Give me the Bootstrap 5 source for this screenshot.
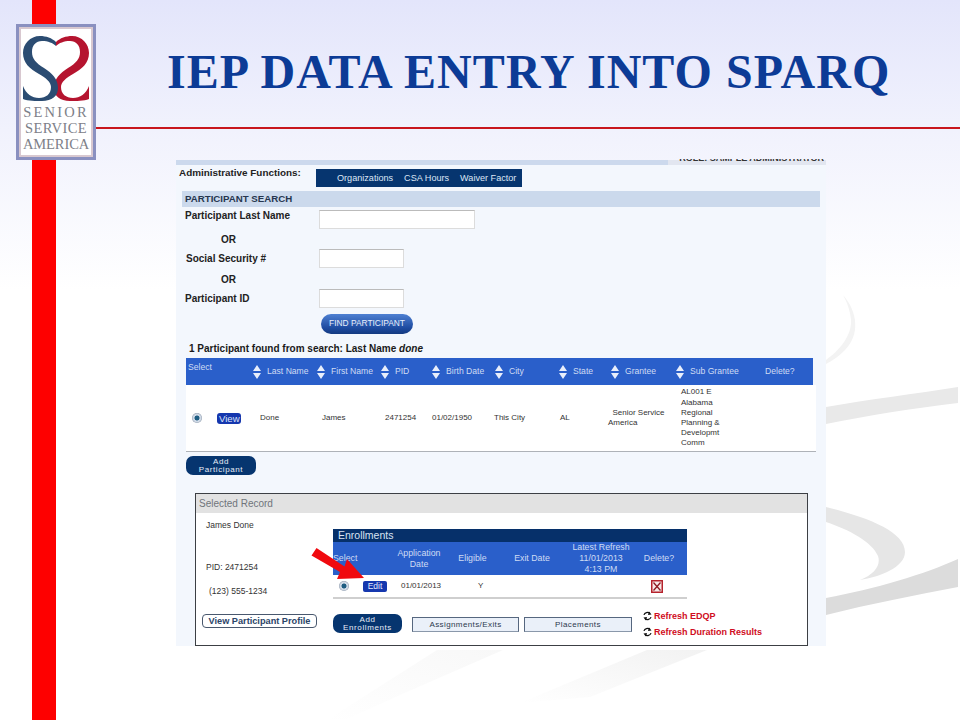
<!DOCTYPE html>
<html lang="en">
<head>
    <meta charset="UTF-8">
    <meta name="viewport" content="width=device-width, initial-scale=1.0">
    <title>IEP Data Entry Into SPARQ</title>
    <link rel="stylesheet" href="https://cdn.jsdelivr.net/npm/bootstrap@5.3.0/dist/css/bootstrap.min.css">
    <style>
        html, body { margin: 0; height: 720px; overflow: hidden; }
        body { background: #fff; font-family: "Liberation Sans", Arial, sans-serif; }

        /* slide canvas */
        .slide { position: relative; width: 960px; height: 720px; overflow: hidden; background: linear-gradient(#e3e5fb 0, #f1f2fd 130px, #fff 290px, #fff 100%); }
        .swoosh { position: absolute; left: 0; top: 0; }
        .red-bar { position: absolute; left: 32px; top: 0; width: 24px; height: 720px; background: #fe0000; }
        .red-line { position: absolute; left: 96px; top: 127px; width: 864px; height: 2px; background: #c8161d; }
        .logo-box { position: absolute; left: 16px; top: 24px; width: 80px; height: 136px; background: #fff; border: 3px solid #8a90c0; box-shadow: inset 0 0 0 2px #d8c8d0; }
        .logo-box svg { display: block; margin: 9px auto 0; }
        .logo-text { margin-top: 2px; font-family: "Liberation Serif", serif; color: #7d8088; font-size: 14.5px; line-height: 16px; text-align: center; }
        .logo-senior { letter-spacing: 2.2px; }
        .logo-service { letter-spacing: .4px; }
        .logo-america { letter-spacing: -.1px; }
        .slide-title { position: absolute; left: 167px; top: 44px; margin: 0; white-space: nowrap; font: bold 48px/55px "Liberation Serif", serif; letter-spacing: 1.05px; color: #0c3b96; }

        /* pasted screenshot */
        .shot { position: absolute; left: 176px; top: 160px; width: 650px; height: 486px; background: #f3f7fd; color: #111; font-size: 8.5px; }
        .role-clip { position: absolute; right: 2px; top: -1px; height: 3px; overflow: hidden; font-weight: 700; font-size: 9px; line-height: 9px; color: #333; }
        .role-clip span { display: block; margin-top: -5px; }
        .top-strip { display: flex; height: 5px; background: #ccd9ed; }
        .top-strip-end { width: 158px; margin-left: auto; background: #e2e6f0; }
        .admin-row { display: flex; align-items: flex-start; height: 26px; padding-left: 3px; }
        .admin-label { width: 137px; padding-top: 1px; font-weight: 700; font-size: 9.9px; line-height: 14px; color: #222; }
        .admin-menu { display: flex; width: 206px; height: 18px; margin-top: 4px; padding-left: 21px; gap: 11px; background: #06356f; color: #dce6f5; font-size: 9.1px; line-height: 18px; }
        .search-head { height: 16px; margin: 0 6px; padding-left: 3px; background: #cbd9ec; font-weight: 700; font-size: 9.7px; line-height: 16px; color: #26364f; }
        .form-line { display: flex; align-items: flex-start; }
        .line-name { margin-top: 2px; height: 20px; }
        .line-ssn { margin-top: 3px; }
        .line-pid { margin-top: 3px; }
        .field-label { width: 143px; padding-left: 9px; font-weight: 700; font-size: 10px; line-height: 13px; color: #222; }
        .line-ssn .field-label, .line-pid .field-label { padding-top: 3px; }
        .line-ssn .field-label { padding-left: 10px; }
        .or-label { padding-left: 45px; font-weight: 700; font-size: 10px; line-height: 13px; color: #222; }
        .or-first { margin-top: 4px; }
        .or-second { margin-top: 5px; }
        .field { height: 19px; background: #fff; border: 1px solid #dcdcdc; border-top-color: #bbb; }
        .line-name .field { width: 156px; margin-top: 1px; }
        .line-ssn .field, .line-pid .field { width: 85px; }
        .find-btn { width: 92px; height: 20px; margin: 6px 0 0 145px; border-radius: 10px; background: linear-gradient(#4e80d2, #1d4ba0 70%, #143a80); color: #e8eefa; font-size: 8.4px; line-height: 19px; text-align: center; }
        .found { margin-top: 8px; padding-left: 13px; font-weight: 700; font-size: 10px; line-height: 14px; color: #1a1a1a; }

        .grid-head { display: grid; grid-template-columns: 67px 64px 64px 51px 63px 64px 52px 65px 89px 1fr; align-items: center; width: 627px; height: 27px; margin: 2px 0 0 10px; background: #2a5fca; color: #cfdcf4; font-size: 8.6px; }
        .head-select { align-self: start; padding: 3px 0 0 2px; }
        .head-cell { display: flex; align-items: center; gap: 6px; white-space: nowrap; }
        .sort { display: block; flex: none; }
        .grid-body { display: grid; grid-template-columns: 25px 43px 62px 63px 47px 62px 66px 48px 73px 1fr; align-items: center; width: 630px; height: 67px; margin-left: 10px; padding-left: 6px; background: #fff; border-bottom: 1px solid #aeb2b8; font-size: 8px; line-height: 10.2px; color: #333; }
        .cell-nowrap { white-space: nowrap; }
        .radio-dot { display: block; width: 10px; height: 10px; border-radius: 50%; background: radial-gradient(circle, #1e5d82 0 2.2px, #cfd9e6 2.8px 4px, #8a97a8 5px); }
        .view-tag { justify-self: start; padding: 0 1px 0 2px; background: #1537ae; color: #dbe4fb; font-size: 9.6px; line-height: 11px; border-radius: 3px; }
        .navy-btn { background: #06356f; color: #e6ecf6; border-radius: 7px; font-size: 8px; line-height: 7.5px; letter-spacing: .6px; text-align: center; }
        .add-part { width: 70px; height: 19px; margin: 4px 0 0 10px; padding-top: 2px; }

        .record { position: relative; width: 613px; height: 153px; margin: 18px 0 0 19px; background: #fff; border: 1px solid #3c3f44; }
        .record-title { height: 19px; background: #e2e2e2; color: #70757b; font-size: 10px; line-height: 19px; padding-left: 3px; }
        .record-top { display: flex; height: 86px; }
        .person { width: 137px; padding: 7px 0 0 10px; font-size: 8.5px; line-height: 10px; color: #333; }
        .person-pid { margin-top: 32px; }
        .person-phone { margin-top: 14px; padding-left: 3px; }
        .enroll { width: 354px; margin-top: 16px; }
        .enroll-title { height: 13px; background: #06306a; color: #d9e3f3; font-size: 10.5px; line-height: 13px; padding-left: 5px; }
        .enroll-head { display: grid; grid-template-columns: 53px 66px 41px 78px 60px 56px; align-items: center; height: 33px; background: #2a5fca; color: #cfdcf4; font-size: 8.8px; line-height: 11px; text-align: center; }
        .enroll-head span:first-child { text-align: left; }
        .enroll-row { display: grid; grid-template-columns: 24px 38px 77px 173px 1fr; align-items: center; height: 24px; padding-left: 6px; border-bottom: 2px solid #cfcfcf; font-size: 8px; color: #333; }
        .edit-tag { width: 24px; height: 11px; background: #1537ae; color: #e3e9fc; border-radius: 2px; font-size: 8.5px; line-height: 11px; text-align: center; }
        .record-bottom { display: flex; align-items: flex-start; margin-top: 15px; padding-left: 6px; }
        .profile-btn { width: 115px; height: 14px; background: #fff; border: 1px solid #49586e; border-radius: 4px; font-weight: 700; font-size: 9.2px; line-height: 12px; text-align: center; color: #2b4468; }
        .add-enroll { width: 69px; height: 19px; margin-left: 16px; padding-top: 2px; }
        .tab-btn { height: 15px; margin-top: 3px; background: #eaf0f9; border: 1px solid #56677f; border-bottom-color: #8a98aa; color: #2c3a4e; font-size: 8px; letter-spacing: .4px; line-height: 13px; text-align: center; }
        .tab-assign { width: 107px; margin-left: 10px; }
        .tab-place { width: 108px; margin-left: 5px; }
        .refresh-col { display: flex; flex-direction: column; gap: 4px; margin: -4px 0 0 11px; }
        .refresh { display: flex; align-items: center; gap: 2px; white-space: nowrap; color: #d00c22; font-weight: 700; font-size: 9px; line-height: 12px; }
        .overlay-svg { position: absolute; left: 0; top: 0; pointer-events: none; }
    </style>
</head>
<body>

    <div class="slide">
        <!-- grey background swooshes -->
        <svg class="swoosh" width="960" height="720" viewBox="0 0 960 720">
            <defs>
                <linearGradient id="fadeOne" x1="1" y1="0" x2="0" y2="1"><stop offset="0" stop-color="#f8f8f8"/><stop offset="1" stop-color="#fff"/></linearGradient>
                <linearGradient id="fadeTwo" x1="1" y1="0" x2="0" y2="1"><stop offset="0" stop-color="#f2f2f2"/><stop offset="1" stop-color="#fff"/></linearGradient>
            </defs>
            <path d="M843 295 C858 312 860 335 845 350 C838 357 832 361 826 364 L826 360 C840 350 852 335 851 320 C850 310 847 302 843 295Z" fill="#f3f3f3"/>
            <path d="M826 407 C870 399 915 394 958 387 L958 403 C915 408 870 415 826 424Z" fill="#e9e9e9"/>
            <path d="M826 507 C870 518 905 532 905 552 C905 567 880 577 860 580 C875 574 881 565 878 556 C872 542 850 530 826 522Z" fill="#e6e6e6"/>
            <path d="M826 598 C875 589 925 574 958 559 L958 587 C915 595 870 604 826 615Z" fill="#dcdcdc"/>
            <path d="M437 650 L503 650 L400 695 L345 720 L327 720Z" fill="url(#fadeOne)"/>
            <path d="M647 650 L707 650 L590 697 L520 703Z" fill="url(#fadeTwo)"/>
        </svg>

        <div class="red-bar"></div>
        <div class="red-line"></div>

        <div class="logo-box">
            <svg width="68" height="66" viewBox="0 0 68 66">
                <path d="M34 6 C38 2 44 0 50 0 C60 0 67 8 67 17 C67 27 60 33 51 38 C44 42 39 46 39 51 C39 58 44 62 51 62 C58 62 64 58 67 50 L67 63 C62 65 54 65 48 65 C38 65 32 60 32 52 C32 43 38 37 46 32 C54 27 58 23 58 16 C58 9 54 5 48 5 C42 5 37 7 34 10Z" fill="#b5142f"/>
                <path d="M34 6 C30 2 24 0 18 0 C8 0 1 8 1 17 C1 27 8 33 17 38 C24 42 29 46 29 51 C29 58 24 62 17 62 C10 62 4 58 1 50 L1 63 C6 65 14 65 20 65 C30 65 36 60 36 52 C36 43 30 37 22 32 C14 27 10 23 10 16 C10 9 14 5 20 5 C26 5 31 7 34 10Z" fill="#2b4c72"/>
            </svg>
            <div class="logo-text">
                <div class="logo-senior">SENIOR</div>
                <div class="logo-service">SERVICE</div>
                <div class="logo-america">AMERICA</div>
            </div>
        </div>

        <h1 class="slide-title">IEP DATA ENTRY INTO SPARQ</h1>

        <div class="shot">
            <div class="role-clip"><span>ROLE: SAMPLE ADMINISTRATOR</span></div>
            <div class="top-strip"><div class="top-strip-end"></div></div>
            <div class="admin-row">
                <div class="admin-label">Administrative Functions:</div>
                <div class="admin-menu"><span>Organizations</span><span>CSA Hours</span><span>Waiver Factor</span></div>
            </div>
            <div class="search-head">PARTICIPANT SEARCH</div>

            <div class="form-line line-name">
                <div class="field-label">Participant Last Name</div>
                <div class="field"></div>
            </div>
            <div class="or-label or-first">OR</div>
            <div class="form-line line-ssn">
                <div class="field-label">Social Security #</div>
                <div class="field"></div>
            </div>
            <div class="or-label or-second">OR</div>
            <div class="form-line line-pid">
                <div class="field-label">Participant ID</div>
                <div class="field"></div>
            </div>
            <div class="find-btn">FIND PARTICIPANT</div>

            <div class="found">1 Participant found from search: Last Name <em>done</em></div>

            <div class="grid-head">
                <span class="head-select">Select</span>
                <span class="head-cell"><svg class="sort" width="8" height="14" viewBox="0 0 8 14"><path d="M4 0 8 6H0ZM0 8H8L4 14Z" fill="#e8eefb"/></svg>Last Name</span>
                <span class="head-cell"><svg class="sort" width="8" height="14" viewBox="0 0 8 14"><path d="M4 0 8 6H0ZM0 8H8L4 14Z" fill="#e8eefb"/></svg>First Name</span>
                <span class="head-cell"><svg class="sort" width="8" height="14" viewBox="0 0 8 14"><path d="M4 0 8 6H0ZM0 8H8L4 14Z" fill="#e8eefb"/></svg>PID</span>
                <span class="head-cell"><svg class="sort" width="8" height="14" viewBox="0 0 8 14"><path d="M4 0 8 6H0ZM0 8H8L4 14Z" fill="#e8eefb"/></svg>Birth Date</span>
                <span class="head-cell"><svg class="sort" width="8" height="14" viewBox="0 0 8 14"><path d="M4 0 8 6H0ZM0 8H8L4 14Z" fill="#e8eefb"/></svg>City</span>
                <span class="head-cell"><svg class="sort" width="8" height="14" viewBox="0 0 8 14"><path d="M4 0 8 6H0ZM0 8H8L4 14Z" fill="#e8eefb"/></svg>State</span>
                <span class="head-cell"><svg class="sort" width="8" height="14" viewBox="0 0 8 14"><path d="M4 0 8 6H0ZM0 8H8L4 14Z" fill="#e8eefb"/></svg>Grantee</span>
                <span class="head-cell"><svg class="sort" width="8" height="14" viewBox="0 0 8 14"><path d="M4 0 8 6H0ZM0 8H8L4 14Z" fill="#e8eefb"/></svg>Sub Grantee</span>
                <span class="head-cell">Delete?</span>
            </div>
            <div class="grid-body">
                <span class="radio-dot"></span>
                <span class="view-tag">View</span>
                <span>Done</span>
                <span>James</span>
                <span>2471254</span>
                <span class="cell-nowrap">01/02/1950</span>
                <span>This City</span>
                <span>AL</span>
                <span class="cell-nowrap">&nbsp;&nbsp;Senior Service<br>America</span>
                <span class="cell-nowrap">AL001 E<br>Alabama<br>Regional<br>Planning &amp;<br>Developmt<br>Comm</span>
            </div>
            <div class="navy-btn add-part">Add<br>Participant</div>

            <div class="record">
                <div class="record-title">Selected Record</div>
                <div class="record-top">
                    <div class="person">
                        <div>James Done</div>
                        <div class="person-pid">PID: 2471254</div>
                        <div class="person-phone">(123) 555-1234</div>
                    </div>
                    <div class="enroll">
                        <div class="enroll-title">Enrollments</div>
                        <div class="enroll-head">
                            <span>Select</span>
                            <span>Application<br>Date</span>
                            <span>Eligible</span>
                            <span>Exit Date</span>
                            <span>Latest Refresh<br>11/01/2013<br>4:13 PM</span>
                            <span>Delete?</span>
                        </div>
                        <div class="enroll-row">
                            <span class="radio-dot"></span>
                            <span class="edit-tag">Edit</span>
                            <span>01/01/2013</span>
                            <span>Y</span>
                            <svg width="12" height="13" viewBox="0 0 12 13"><rect x=".75" y=".75" width="10.5" height="11.5" fill="#f7e9e9" stroke="#b5222c" stroke-width="1.5"/><path d="M2.5 2.5 9.5 10.5M9.5 2.5 2.5 10.5" stroke="#8e1a22" stroke-width="1.3"/></svg>
                        </div>
                    </div>
                </div>
                <div class="record-bottom">
                    <div class="profile-btn">View Participant Profile</div>
                    <div class="navy-btn add-enroll">Add<br>Enrollments</div>
                    <div class="tab-btn tab-assign">Assignments/Exits</div>
                    <div class="tab-btn tab-place">Placements</div>
                    <div class="refresh-col">
                        <span class="refresh"><svg width="9" height="10" viewBox="0 0 9 10"><path d="M1 4C1.5 1.5 5 .5 7 2.5M8 6C7.5 8.5 4 9.5 2 7.5" fill="none" stroke="#111" stroke-width="1.2"/><path d="M6 .5 8.5 3.5 5 4ZM3 9.5 .5 6.5 4 6Z" fill="#111"/></svg>Refresh EDQP</span>
                        <span class="refresh"><svg width="9" height="10" viewBox="0 0 9 10"><path d="M1 4C1.5 1.5 5 .5 7 2.5M8 6C7.5 8.5 4 9.5 2 7.5" fill="none" stroke="#111" stroke-width="1.2"/><path d="M6 .5 8.5 3.5 5 4ZM3 9.5 .5 6.5 4 6Z" fill="#111"/></svg>Refresh Duration Results</span>
                    </div>
                </div>

                <!-- red arrow over the table -->
                <svg class="overlay-svg" width="200" height="110" viewBox="0 0 200 110">
                    <path d="M115.5 61.5 L120.5 54 L148.5 72.5 L151 65 L168 84 L141 85 L144 78Z" fill="#f00a0f"/>
                </svg>
            </div>
        </div>
    </div>

</body>
</html>
